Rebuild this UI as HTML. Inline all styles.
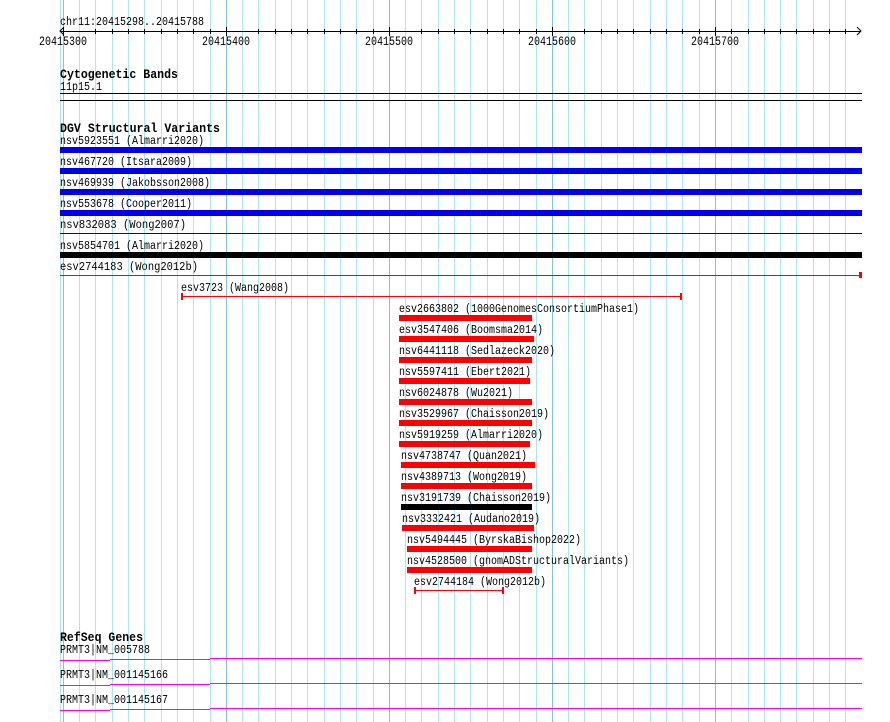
<!DOCTYPE html>
<html><head><meta charset="utf-8"><style>
html,body{margin:0;padding:0;background:#fff;width:890px;height:722px;overflow:hidden}
svg text{font-family:"Liberation Mono",monospace;font-size:11.5px;fill:#000}
svg text.b{font-weight:bold;font-size:12.5px}
</style></head><body>
<svg width="890" height="722" xmlns="http://www.w3.org/2000/svg">
<g fill="#ace6ee">
<rect x="60" y="0" width="1" height="722"/>
<rect x="79" y="0" width="1" height="722"/><rect x="95" y="0" width="1" height="722"/><rect x="112" y="0" width="1" height="722"/><rect x="128" y="0" width="1" height="722"/><rect x="144" y="0" width="1" height="722"/><rect x="161" y="0" width="1" height="722"/><rect x="177" y="0" width="1" height="722"/><rect x="193" y="0" width="1" height="722"/><rect x="210" y="0" width="1" height="722"/>
<rect x="242" y="0" width="1" height="722"/><rect x="258" y="0" width="1" height="722"/><rect x="275" y="0" width="1" height="722"/><rect x="291" y="0" width="1" height="722"/><rect x="307" y="0" width="1" height="722"/><rect x="324" y="0" width="1" height="722"/><rect x="340" y="0" width="1" height="722"/><rect x="356" y="0" width="1" height="722"/><rect x="373" y="0" width="1" height="722"/>
<rect x="405" y="0" width="1" height="722"/><rect x="421" y="0" width="1" height="722"/><rect x="438" y="0" width="1" height="722"/><rect x="454" y="0" width="1" height="722"/><rect x="470" y="0" width="1" height="722"/><rect x="487" y="0" width="1" height="722"/><rect x="503" y="0" width="1" height="722"/><rect x="519" y="0" width="1" height="722"/><rect x="536" y="0" width="1" height="722"/>
<rect x="568" y="0" width="1" height="722"/><rect x="584" y="0" width="1" height="722"/><rect x="601" y="0" width="1" height="722"/><rect x="617" y="0" width="1" height="722"/><rect x="633" y="0" width="1" height="722"/><rect x="650" y="0" width="1" height="722"/><rect x="666" y="0" width="1" height="722"/><rect x="682" y="0" width="1" height="722"/><rect x="699" y="0" width="1" height="722"/>
<rect x="731" y="0" width="1" height="722"/><rect x="748" y="0" width="1" height="722"/><rect x="764" y="0" width="1" height="722"/><rect x="780" y="0" width="1" height="722"/><rect x="796" y="0" width="1" height="722"/><rect x="813" y="0" width="1" height="722"/><rect x="829" y="0" width="1" height="722"/><rect x="845" y="0" width="1" height="722"/>
</g>
<g fill="#86c2e2">
<rect x="63" y="0" width="1" height="722"/><rect x="226" y="0" width="1" height="722"/><rect x="389" y="0" width="1" height="722"/><rect x="552" y="0" width="1" height="722"/><rect x="715" y="0" width="1" height="722"/>
</g>
<text x="60" y="25" textLength="144" lengthAdjust="spacingAndGlyphs">chr11:20415298..20415788</text>
<rect x="60" y="31" width="801" height="1" fill="#000"/>
<path d="M64 27 L60 31 L64 35 M857 27 L861 31 L857 35" stroke="#000" fill="none"/>
<g fill="#000">
<rect x="63" y="27" width="1" height="9"/><rect x="226" y="27" width="1" height="9"/><rect x="389" y="27" width="1" height="9"/><rect x="552" y="27" width="1" height="9"/><rect x="715" y="27" width="1" height="9"/>
<rect x="95" y="29" width="1" height="5"/><rect x="112" y="29" width="1" height="5"/><rect x="128" y="29" width="1" height="5"/><rect x="144" y="29" width="1" height="5"/><rect x="161" y="29" width="1" height="5"/><rect x="177" y="29" width="1" height="5"/><rect x="193" y="29" width="1" height="5"/><rect x="210" y="29" width="1" height="5"/>
<rect x="258" y="29" width="1" height="5"/><rect x="275" y="29" width="1" height="5"/><rect x="291" y="29" width="1" height="5"/><rect x="307" y="29" width="1" height="5"/><rect x="324" y="29" width="1" height="5"/><rect x="340" y="29" width="1" height="5"/><rect x="356" y="29" width="1" height="5"/><rect x="373" y="29" width="1" height="5"/>
<rect x="421" y="29" width="1" height="5"/><rect x="438" y="29" width="1" height="5"/><rect x="454" y="29" width="1" height="5"/><rect x="470" y="29" width="1" height="5"/><rect x="487" y="29" width="1" height="5"/><rect x="503" y="29" width="1" height="5"/><rect x="519" y="29" width="1" height="5"/><rect x="536" y="29" width="1" height="5"/>
<rect x="584" y="29" width="1" height="5"/><rect x="601" y="29" width="1" height="5"/><rect x="617" y="29" width="1" height="5"/><rect x="633" y="29" width="1" height="5"/><rect x="650" y="29" width="1" height="5"/><rect x="666" y="29" width="1" height="5"/><rect x="682" y="29" width="1" height="5"/><rect x="699" y="29" width="1" height="5"/>
<rect x="731" y="29" width="1" height="5"/><rect x="748" y="29" width="1" height="5"/><rect x="764" y="29" width="1" height="5"/><rect x="780" y="29" width="1" height="5"/><rect x="796" y="29" width="1" height="5"/><rect x="813" y="29" width="1" height="5"/><rect x="829" y="29" width="1" height="5"/><rect x="845" y="29" width="1" height="5"/>
</g>
<g style="font-size:12.5px">
<text x="39" y="45" textLength="48" lengthAdjust="spacingAndGlyphs" style="font-size:12.5px">20415300</text>
<text x="202" y="45" textLength="48" lengthAdjust="spacingAndGlyphs" style="font-size:12.5px">20415400</text>
<text x="365" y="45" textLength="48" lengthAdjust="spacingAndGlyphs" style="font-size:12.5px">20415500</text>
<text x="528" y="45" textLength="48" lengthAdjust="spacingAndGlyphs" style="font-size:12.5px">20415600</text>
<text x="691" y="45" textLength="48" lengthAdjust="spacingAndGlyphs" style="font-size:12.5px">20415700</text>
</g>
<text class="b" x="60" y="78" textLength="118" lengthAdjust="spacingAndGlyphs">Cytogenetic Bands</text>
<text x="60" y="90" textLength="42" lengthAdjust="spacingAndGlyphs">11p15.1</text>
<rect x="60" y="93" width="802" height="1" fill="#000"/>
<rect x="60" y="100" width="802" height="1" fill="#000"/>
<text class="b" x="60" y="132" textLength="160" lengthAdjust="spacingAndGlyphs">DGV Structural Variants</text>
<text x="60" y="144" textLength="144" lengthAdjust="spacingAndGlyphs">nsv5923551 (Almarri2020)</text>
<rect x="60" y="147" width="802" height="6" fill="#0000ee"/>
<text x="60" y="165" textLength="132" lengthAdjust="spacingAndGlyphs">nsv467720 (Itsara2009)</text>
<rect x="60" y="168" width="802" height="6" fill="#0000ee"/>
<text x="60" y="186" textLength="150" lengthAdjust="spacingAndGlyphs">nsv469939 (Jakobsson2008)</text>
<rect x="60" y="189" width="802" height="6" fill="#0000ee"/>
<text x="60" y="207" textLength="132" lengthAdjust="spacingAndGlyphs">nsv553678 (Cooper2011)</text>
<rect x="60" y="210" width="802" height="6" fill="#0000ee"/>
<text x="60" y="228" textLength="126" lengthAdjust="spacingAndGlyphs">nsv832083 (Wong2007)</text>
<rect x="60" y="233" width="802" height="1" fill="#0000cc"/>
<text x="60" y="249" textLength="144" lengthAdjust="spacingAndGlyphs">nsv5854701 (Almarri2020)</text>
<rect x="60" y="252" width="802" height="6" fill="#000"/>
<text x="60" y="270" textLength="138" lengthAdjust="spacingAndGlyphs">esv2744183 (Wong2012b)</text>
<rect x="60" y="275" width="801" height="1" fill="#f00"/>
<rect x="859" y="272" width="3" height="6" fill="#f00"/>
<text x="181" y="291" textLength="108" lengthAdjust="spacingAndGlyphs">esv3723 (Wang2008)</text>
<rect x="182" y="296" width="499" height="1" fill="#f00"/>
<rect x="181" y="293" width="2" height="7" fill="#f00"/><rect x="680" y="293" width="2" height="7" fill="#f00"/>
<g fill="#f00">
<text x="399" y="312" textLength="240" lengthAdjust="spacingAndGlyphs">esv2663802 (1000GenomesConsortiumPhase1)</text>
<rect x="399" y="315" width="133" height="6"/>
<text x="399" y="333" textLength="144" lengthAdjust="spacingAndGlyphs">esv3547406 (Boomsma2014)</text>
<rect x="399" y="336" width="135" height="6"/>
<text x="399" y="354" textLength="156" lengthAdjust="spacingAndGlyphs">nsv6441118 (Sedlazeck2020)</text>
<rect x="399" y="357" width="133" height="6"/>
<text x="399" y="375" textLength="132" lengthAdjust="spacingAndGlyphs">nsv5597411 (Ebert2021)</text>
<rect x="399" y="378" width="131" height="6"/>
<text x="399" y="396" textLength="114" lengthAdjust="spacingAndGlyphs">nsv6024878 (Wu2021)</text>
<rect x="399" y="399" width="133" height="6"/>
<text x="399" y="417" textLength="150" lengthAdjust="spacingAndGlyphs">nsv3529967 (Chaisson2019)</text>
<rect x="399" y="420" width="133" height="6"/>
<text x="399" y="438" textLength="144" lengthAdjust="spacingAndGlyphs">nsv5919259 (Almarri2020)</text>
<rect x="399" y="441" width="131" height="6"/>
<text x="401" y="459" textLength="126" lengthAdjust="spacingAndGlyphs">nsv4738747 (Quan2021)</text>
<rect x="401" y="462" width="134" height="6"/>
<text x="401" y="480" textLength="126" lengthAdjust="spacingAndGlyphs">nsv4389713 (Wong2019)</text>
<rect x="401" y="483" width="131" height="6"/>
<text x="401" y="501" textLength="150" lengthAdjust="spacingAndGlyphs">nsv3191739 (Chaisson2019)</text>
<rect x="401" y="504" width="131" height="6" fill="#000"/>
<text x="402" y="522" textLength="138" lengthAdjust="spacingAndGlyphs">nsv3332421 (Audano2019)</text>
<rect x="402" y="525" width="132" height="6"/>
<text x="407" y="543" textLength="174" lengthAdjust="spacingAndGlyphs">nsv5494445 (ByrskaBishop2022)</text>
<rect x="407" y="546" width="125" height="6"/>
<text x="407" y="564" textLength="222" lengthAdjust="spacingAndGlyphs">nsv4528500 (gnomADStructuralVariants)</text>
<rect x="407" y="567" width="125" height="6"/>
<text x="414" y="585" textLength="132" lengthAdjust="spacingAndGlyphs">esv2744184 (Wong2012b)</text>
<rect x="415" y="590" width="88" height="1"/>
<rect x="414" y="587" width="2" height="7"/><rect x="502" y="587" width="2" height="7"/>
</g>
<text class="b" x="60" y="641" textLength="83" lengthAdjust="spacingAndGlyphs">RefSeq Genes</text>
<text x="60" y="653" textLength="90" lengthAdjust="spacingAndGlyphs">PRMT3|NM_005788</text>
<g fill="#f0f">
<rect x="60" y="660" width="50" height="1"/><rect x="110" y="659" width="100" height="1"/><rect x="210" y="658" width="652" height="1"/>
<rect x="60" y="685" width="50" height="1"/><rect x="110" y="684" width="100" height="1"/><rect x="210" y="683" width="652" height="1"/>
<rect x="60" y="710" width="50" height="1"/><rect x="110" y="709" width="100" height="1"/><rect x="210" y="708" width="652" height="1"/>
</g>
<text x="60" y="678" textLength="108" lengthAdjust="spacingAndGlyphs">PRMT3|NM_001145166</text>
<text x="60" y="703" textLength="108" lengthAdjust="spacingAndGlyphs">PRMT3|NM_001145167</text>
</svg>
</body></html>
